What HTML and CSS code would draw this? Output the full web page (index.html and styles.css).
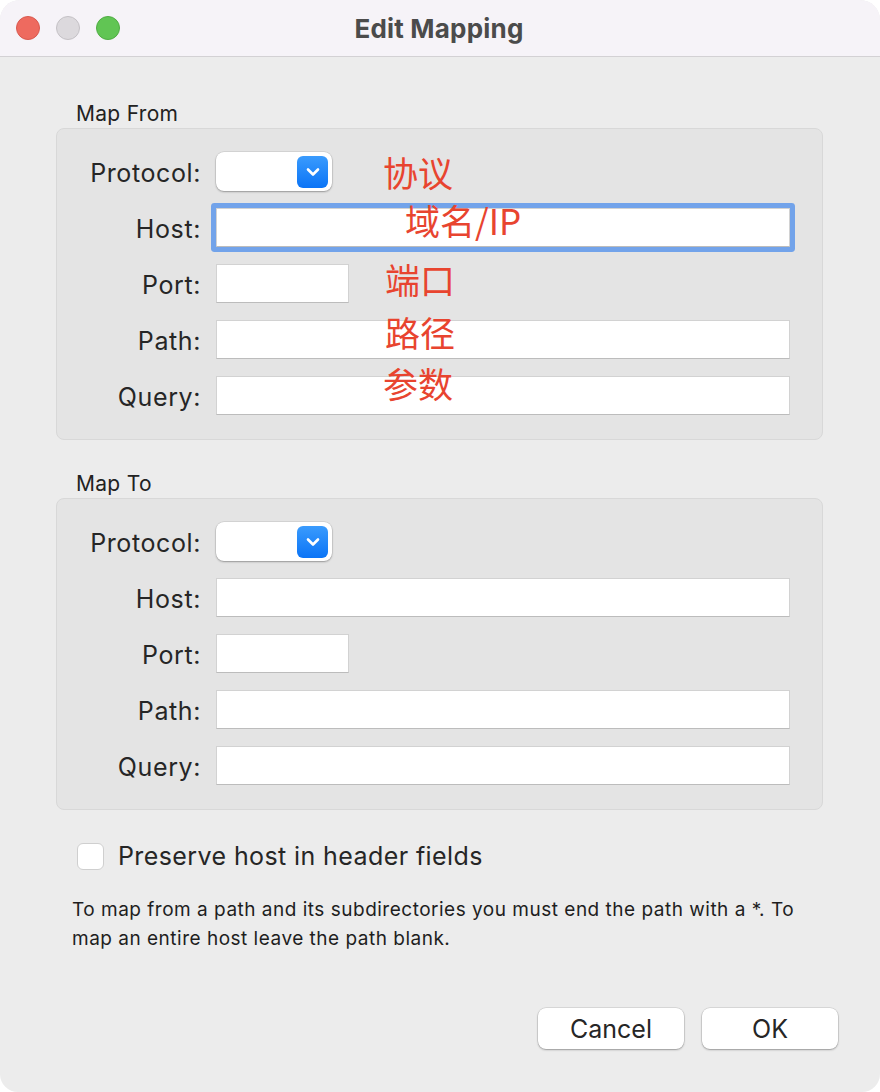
FILE: index.html
```html
<!DOCTYPE html>
<html lang="en">
  <head>
    <meta charset="UTF-8" />
    <meta name="viewport" content="width=device-width, initial-scale=1.0" />
    <title>Edit Mapping</title>
    <link rel="stylesheet" href="styles.css">
  </head>

  <body>
    <div class="window">
      <div class="titlebar">
        <div class="lights">
          <span class="light red"></span>
          <span class="light grey"></span>
          <span class="light green"></span>
        </div>
        <div class="title">Edit Mapping</div>
        <div></div>
      </div>

      <div class="content">
        <div class="legend">Map From</div>
        <div class="group">
          <label>Protocol:</label>
          <div class="popup"><span class="arrow"><svg width="16" height="12" viewBox="0 0 16 12"><path d="M3 3.5l5 5 5-5" fill="none" stroke="#fff" stroke-width="2.6" stroke-linecap="round" stroke-linejoin="round"/></svg></span></div>
          <label>Host:</label>
          <div class="field focused"></div>
          <label>Port:</label>
          <div class="field port"></div>
          <label>Path:</label>
          <div class="field"></div>
          <label>Query:</label>
          <div class="field"></div>

          <span class="note n1">协议</span>
          <span class="note n2">域名/IP</span>
          <span class="note n3">端口</span>
          <span class="note n4">路径</span>
          <span class="note n5">参数</span>
        </div>

        <div class="legend">Map To</div>
        <div class="group">
          <label>Protocol:</label>
          <div class="popup"><span class="arrow"><svg width="16" height="12" viewBox="0 0 16 12"><path d="M3 3.5l5 5 5-5" fill="none" stroke="#fff" stroke-width="2.6" stroke-linecap="round" stroke-linejoin="round"/></svg></span></div>
          <label>Host:</label>
          <div class="field"></div>
          <label>Port:</label>
          <div class="field port"></div>
          <label>Path:</label>
          <div class="field"></div>
          <label>Query:</label>
          <div class="field"></div>
        </div>

        <div class="check">
          <span class="box"></span>
          <span>Preserve host in header fields</span>
        </div>

        <p class="hint">To map from a path and its subdirectories you must end the path with a *. To map an entire host leave the path blank.</p>

        <div class="buttons">
          <button class="cancel">Cancel</button>
          <button class="ok">OK</button>
        </div>
      </div>
    </div>
  </body>
</html>
```

FILE: styles.css
```css
body,
html {
  margin: 0;
  height: 100%;
  background: #ffffff;
  font-family: Inter, "Liberation Sans", sans-serif;
  color: #262626;
}

.window {
  height: 1092px;
  background: #ececec;
  border-radius: 20px 20px 18px 18px;
  overflow: hidden;
}

.titlebar {
  height: 56px;
  background: #f6f3f8;
  border-bottom: 1px solid #d3d1d4;
  display: grid;
  grid-template-columns: 1fr auto 1fr;
  align-items: center;
}
.lights {
  display: flex;
  gap: 16px;
  padding-left: 16px;
}
.light {
  width: 22px;
  height: 22px;
  border-radius: 50%;
  border: 1px solid;
}
.red {
  background: #ee6a5f;
  border-color: #d8594f;
}
.grey {
  background: #dcd9dd;
  border-color: #c4c1c5;
}
.green {
  background: #61c554;
  border-color: #50ac44;
}
.title {
  font-size: 26px;
  font-weight: 700;
  letter-spacing: 0.2px;
  color: #4b4b4b;
  padding-right: 2px;
}

.content {
  padding: 44px 42px 0 56px;
}

.legend {
  font-size: 21px;
  letter-spacing: 0.3px;
  line-height: 26px;
  padding-left: 20px;
  margin-bottom: 1px;
  color: #222;
}

.group {
  position: relative;
  margin-right: 15px;
  margin-bottom: 31px;
  background: #e4e4e4;
  border: 1px solid #d8d8d8;
  border-radius: 8px;
  padding: 23px 32px 24px 0;
  display: grid;
  grid-template-columns: 144px 1fr;
  column-gap: 15px;
  row-gap: 17px;
  align-items: center;
}
.group label {
  text-align: right;
  font-size: 25px;
  letter-spacing: 0.6px;
  line-height: 30px;
  padding-top: 3px;
  color: #262626;
}

.field {
  height: 37px;
  background: #fff;
  border: 1px solid #d2d2d2;
  border-bottom-color: #bcbcbc;
}
.field.port {
  width: 131px;
}
.field.focused {
  box-shadow: 0 0 0 5px #72a3ea;
  border-radius: 1px;
}

.popup {
  width: 116px;
  height: 39px;
  box-sizing: border-box;
  background: #fff;
  border-radius: 8px;
  box-shadow: 0 0 0 0.5px rgba(0, 0, 0, 0.12), 0 1px 2px rgba(0, 0, 0, 0.3);
  display: flex;
  justify-content: flex-end;
  align-items: center;
  padding-right: 4px;
}
.arrow {
  width: 31px;
  height: 32px;
  border-radius: 6px;
  background: linear-gradient(#3a9bfd, #0b74f6);
  display: flex;
  align-items: center;
  justify-content: center;
}

.note {
  position: absolute;
  font-family: "Noto Sans CJK SC", sans-serif;
  font-size: 35px;
  line-height: 40px;
  color: #e8442f;
}
.n1 { left: 326px; top: 23px; }
.n2 { left: 348px; top: 71px; }
.n3 { left: 328px; top: 130px; }
.n4 { left: 328px; top: 183px; }
.n5 { left: 326px; top: 234px; }

.check {
  display: flex;
  align-items: center;
  gap: 14px;
  padding-left: 21px;
  font-size: 25px;
  letter-spacing: 0.4px;
  color: #262626;
}
.box {
  width: 25px;
  height: 25px;
  background: #fff;
  border: 1px solid #cfcfcf;
  border-radius: 6px;
}

.hint {
  margin: 24px 0 0 16px;
  font-size: 19px;
  letter-spacing: 0.5px;
  line-height: 29px;
  color: #1e1e1e;
}

.buttons {
  display: flex;
  justify-content: flex-end;
  gap: 18px;
  margin-top: 55px;
}
button {
  height: 41px;
  background: #fff;
  border: none;
  border-radius: 8px;
  box-shadow: 0 0 0 0.5px rgba(0, 0, 0, 0.15), 0 1px 2px rgba(0, 0, 0, 0.3);
  font-family: Inter, "Liberation Sans", sans-serif;
  font-size: 25px;
  color: #262626;
}
.cancel {
  width: 146px;
}
.ok {
  width: 136px;
}
```
